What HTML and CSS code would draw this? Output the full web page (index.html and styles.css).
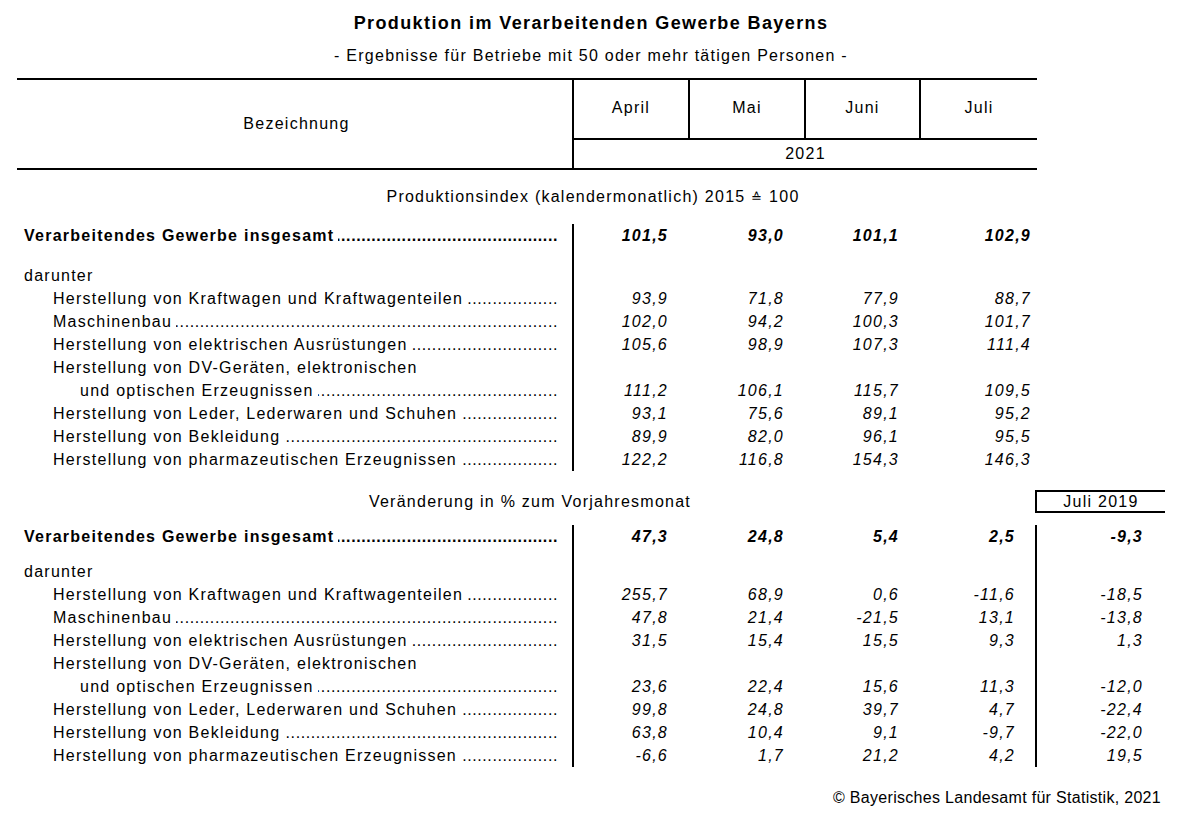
FILE: index.html
```html
<!DOCTYPE html>
<html lang="de">
<head>
<meta charset="utf-8">
<title>Produktion im Verarbeitenden Gewerbe Bayerns</title>
<link rel="stylesheet" href="styles.css">
</head>
<body>
<div class="page">
  <h1 class="title">Produktion im Verarbeitenden Gewerbe Bayerns</h1>
  <p class="subtitle">- Ergebnisse für Betriebe mit 50 oder mehr tätigen Personen -</p>

  <div class="head">
    <div class="head-label">Bezeichnung</div>
    <div class="head-month">April</div>
    <div class="head-month">Mai</div>
    <div class="head-month">Juni</div>
    <div class="head-month head-month--last">Juli</div>
    <div class="head-year">2021</div>
  </div>

  <div class="sec-title sec-title--wide">Produktionsindex (kalendermonatlich) 2015 <span class="corr">≙</span> 100</div>

  <div class="block block--index">
    <div class="row row--total">
      <div class="lbl lbl--dots">Verarbeitendes Gewerbe insgesamt</div>
      <div class="v">101,5</div><div class="v">93,0</div><div class="v">101,1</div><div class="v">102,9</div>
    </div>
    <div class="row row--gap"><div class="lbl"></div></div>
    <div class="row"><div class="lbl">darunter</div></div>
    <div class="row">
      <div class="lbl lbl--dots lbl--l1">Herstellung von Kraftwagen und Kraftwagenteilen</div>
      <div class="v">93,9</div><div class="v">71,8</div><div class="v">77,9</div><div class="v">88,7</div>
    </div>
    <div class="row">
      <div class="lbl lbl--dots lbl--l1">Maschinenbau</div>
      <div class="v">102,0</div><div class="v">94,2</div><div class="v">100,3</div><div class="v">101,7</div>
    </div>
    <div class="row">
      <div class="lbl lbl--dots lbl--l1">Herstellung von elektrischen Ausrüstungen</div>
      <div class="v">105,6</div><div class="v">98,9</div><div class="v">107,3</div><div class="v">111,4</div>
    </div>
    <div class="row">
      <div class="lbl lbl--l1">Herstellung von DV-Geräten, elektronischen</div>
    </div>
    <div class="row">
      <div class="lbl lbl--dots lbl--l2">und optischen Erzeugnissen</div>
      <div class="v">111,2</div><div class="v">106,1</div><div class="v">115,7</div><div class="v">109,5</div>
    </div>
    <div class="row">
      <div class="lbl lbl--dots lbl--l1">Herstellung von Leder, Lederwaren und Schuhen</div>
      <div class="v">93,1</div><div class="v">75,6</div><div class="v">89,1</div><div class="v">95,2</div>
    </div>
    <div class="row">
      <div class="lbl lbl--dots lbl--l1">Herstellung von Bekleidung</div>
      <div class="v">89,9</div><div class="v">82,0</div><div class="v">96,1</div><div class="v">95,5</div>
    </div>
    <div class="row">
      <div class="lbl lbl--dots lbl--l1">Herstellung von pharmazeutischen Erzeugnissen</div>
      <div class="v">122,2</div><div class="v">116,8</div><div class="v">154,3</div><div class="v">146,3</div>
    </div>
  </div>

  <div class="sec2-head">
    <div class="sec-title sec-title--narrow">Veränderung in % zum Vorjahresmonat</div>
    <div class="ref-box">Juli 2019</div>
  </div>

  <div class="block block--change">
    <div class="row row--total">
      <div class="lbl lbl--dots">Verarbeitendes Gewerbe insgesamt</div>
      <div class="v">47,3</div><div class="v">24,8</div><div class="v">5,4</div><div class="v">2,5</div><div class="v">-9,3</div>
    </div>
    <div class="row row--gap2"><div class="lbl"></div><div class="v"></div><div class="v"></div><div class="v"></div><div class="v"></div></div>
    <div class="row"><div class="lbl">darunter</div><div class="v"></div><div class="v"></div><div class="v"></div><div class="v"></div></div>
    <div class="row">
      <div class="lbl lbl--dots lbl--l1">Herstellung von Kraftwagen und Kraftwagenteilen</div>
      <div class="v">255,7</div><div class="v">68,9</div><div class="v">0,6</div><div class="v">-11,6</div><div class="v">-18,5</div>
    </div>
    <div class="row">
      <div class="lbl lbl--dots lbl--l1">Maschinenbau</div>
      <div class="v">47,8</div><div class="v">21,4</div><div class="v">-21,5</div><div class="v">13,1</div><div class="v">-13,8</div>
    </div>
    <div class="row">
      <div class="lbl lbl--dots lbl--l1">Herstellung von elektrischen Ausrüstungen</div>
      <div class="v">31,5</div><div class="v">15,4</div><div class="v">15,5</div><div class="v">9,3</div><div class="v">1,3</div>
    </div>
    <div class="row">
      <div class="lbl lbl--l1">Herstellung von DV-Geräten, elektronischen</div>
      <div class="v"></div><div class="v"></div><div class="v"></div><div class="v"></div>
    </div>
    <div class="row">
      <div class="lbl lbl--dots lbl--l2">und optischen Erzeugnissen</div>
      <div class="v">23,6</div><div class="v">22,4</div><div class="v">15,6</div><div class="v">11,3</div><div class="v">-12,0</div>
    </div>
    <div class="row">
      <div class="lbl lbl--dots lbl--l1">Herstellung von Leder, Lederwaren und Schuhen</div>
      <div class="v">99,8</div><div class="v">24,8</div><div class="v">39,7</div><div class="v">4,7</div><div class="v">-22,4</div>
    </div>
    <div class="row">
      <div class="lbl lbl--dots lbl--l1">Herstellung von Bekleidung</div>
      <div class="v">63,8</div><div class="v">10,4</div><div class="v">9,1</div><div class="v">-9,7</div><div class="v">-22,0</div>
    </div>
    <div class="row">
      <div class="lbl lbl--dots lbl--l1">Herstellung von pharmazeutischen Erzeugnissen</div>
      <div class="v">-6,6</div><div class="v">1,7</div><div class="v">21,2</div><div class="v">4,2</div><div class="v">19,5</div>
    </div>
  </div>

  <div class="footer">© Bayerisches Landesamt für Statistik, 2021</div>
</div>
</body>
</html>
```
FILE: styles.css
```css
* {
  box-sizing: border-box;
}

body {
  margin: 0;
  background: #fff;
  color: #000;
  font-family: "Liberation Sans", Arial, sans-serif;
  font-size: 16px;
  letter-spacing: 1.25px;
}

.page {
  width: 1165px;
  padding-left: 17px;
  padding-top: 12px;
}

.title {
  margin: 0;
  font-size: 18px;
  line-height: 22px;
  font-weight: bold;
  letter-spacing: 1.4px;
  text-align: center;
}

.subtitle {
  margin: 12px 0 0;
  font-size: 16px;
  line-height: 20px;
  text-align: center;
}

/* ---------- table header ---------- */
.head {
  margin-top: 12px;
  width: 1020px;
  display: grid;
  grid-template-columns: 557px 116px 116px 115px 116px;
  grid-template-rows: 60px 28px;
  border-top: 2px solid #000;
  border-bottom: 2px solid #000;
}

.head-label {
  grid-row: 1 / 3;
  border-right: 2px solid #000;
  display: flex;
  align-items: center;
  justify-content: center;
  padding-left: 4px;
}

.head-month {
  border-bottom: 2px solid #000;
  border-right: 2px solid #000;
  text-align: center;
  padding-top: 19px;
  line-height: 18px;
}

.head-month--last {
  border-right: 0;
}

.head-year {
  grid-column: 2 / 6;
  display: flex;
  align-items: center;
  justify-content: center;
}

/* ---------- section titles ---------- */
.sec-title {
  line-height: 20px;
  text-align: center;
}

.corr {
  font-size: 13px;
}

.sec-title--wide {
  margin-top: 17px;
  width: 1148px;
  padding-left: 4px;
}

.sec2-head {
  margin-top: 19px;
  display: flex;
  height: 23px;
}

.sec-title--narrow {
  width: 1018px;
  padding-left: 8px;
  line-height: 23px;
}

.ref-box {
  width: 130px;
  border-top: 2px solid #000;
  border-left: 2px solid #000;
  border-bottom: 2px solid #000;
  text-align: center;
  line-height: 19px;
}

/* ---------- data blocks ---------- */
.block--index {
  margin-top: 16px;
}

.block--change {
  margin-top: 12px;
}

.row {
  display: grid;
  height: 23px;
  line-height: 23px;
}

.block--index .row {
  grid-template-columns: 557px 116px 116px 115px 116px;
}

.block--change .row {
  grid-template-columns: 557px 116px 116px 115px 116px 128px;
}

.row--gap {
  height: 17px;
}

.row--gap2 {
  height: 12px;
}

.lbl {
  border-right: 2px solid #000;
  padding-left: 7px;
  padding-right: 14px;
  white-space: nowrap;
  overflow: hidden;
}

.lbl--l1 {
  padding-left: 36px;
}

.lbl--l2 {
  padding-left: 63px;
}

.lbl--dots {
  display: flex;
}

.lbl--dots::after {
  content: " ....................................................................................................................................................";
  flex: 1;
  min-width: 0;
  overflow: hidden;
  white-space: nowrap;
  direction: rtl;
  margin-left: 4px;
  letter-spacing: 0.6px;
}

.v {
  font-style: italic;
  text-align: right;
  padding-right: 22px;
}

.block--index .v:nth-child(5) {
  padding-right: 6px;
}

.block--change .v:nth-child(5) {
  border-right: 2px solid #000;
  padding-right: 20px;
}

.row--total {
  font-weight: bold;
}

/* ---------- footer ---------- */
.footer {
  margin-top: 21px;
  width: 1144px;
  text-align: right;
  line-height: 20px;
  letter-spacing: 0.3px;
}
```
